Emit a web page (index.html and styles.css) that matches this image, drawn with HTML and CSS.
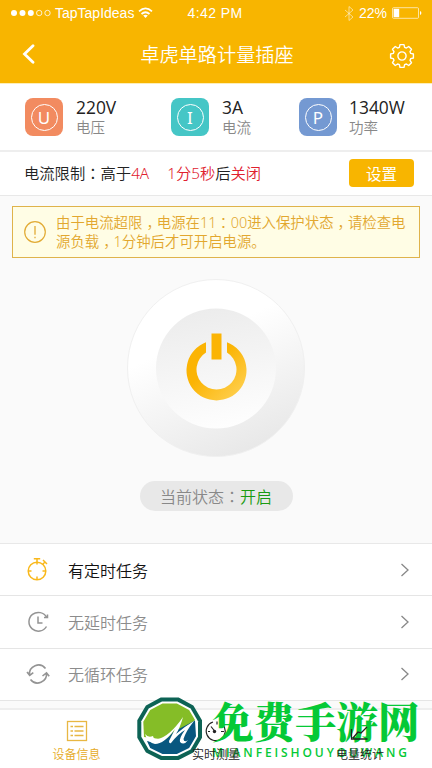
FILE: index.html
```html
<!DOCTYPE html>
<html lang="zh-CN">
<head>
<meta charset="utf-8">
<title>卓虎单路计量插座</title>
<link rel="stylesheet" href="styles.css">
</head>
<body>
<main class="app">
  <header class="header">
    <div class="status">
      <div class="status-left">
        <svg width="42" height="10" viewBox="0 0 42 10"><g fill="#fff"><circle cx="4" cy="5" r="3"/><circle cx="12.5" cy="5" r="3"/><circle cx="20.8" cy="5" r="3"/></g><g fill="none" stroke="#fff" stroke-width=".8"><circle cx="29.2" cy="5" r="2.7"/><circle cx="37.5" cy="5" r="2.7"/></g></svg>
        <span class="carrier">TapTapIdeas</span>
        <svg width="15" height="12" viewBox="0 0 15 12"><g fill="none" stroke="#fff" stroke-width="1.7"><path d="M1 4.3Q7.5-1.5 14 4.3M3.5 7Q7.5 3.5 11.5 7"/></g><path d="M5.2 8.6Q7.5 6.8 9.8 8.6L7.5 11Z" fill="#fff"/></svg>
      </div>
      <span class="time">4:42 PM</span>
      <div class="status-right">
        <svg width="10" height="15" viewBox="0 0 10 15"><path d="M1 4l8 7-4 3.500V.5L9 4l-8 7" fill="none" stroke="#fff" stroke-opacity=".6" stroke-width=".9"/></svg>
        <span class="percent">22%</span>
        <svg width="30" height="12" viewBox="0 0 30 12"><rect x=".5" y=".7" width="26" height="10.6" rx="1" fill="none" stroke="#fff" stroke-opacity=".8" stroke-width=".8"/><rect x="1.6" y="1.8" width="5.6" height="8.4" fill="#fff"/><path d="M28 4v4q1.4-.5 1.4-2T28 4" fill="#fff"/></svg>
      </div>
    </div>
    <nav class="titlebar">
      <svg class="back" width="14" height="20" viewBox="0 0 14 20"><path d="M11 1.7L2.500 10 11 18.300" fill="none" stroke="#fff" stroke-width="2.800" stroke-linecap="round"/></svg>
      <h1>卓虎单路计量插座</h1>
      <svg class="gear" width="26" height="26" viewBox="-13 -13 26 26"><g fill="none" stroke="#fff" stroke-width="1.400" stroke-linejoin="round"><path d="M-2.600-8.700L-2-11.400H2L2.600-8.700 4.400-8 6.700-9.500 9.500-6.700 8-4.400 8.700-2.600 11.400-2V2L8.700 2.600 8 4.400 9.500 6.700 6.700 9.500 4.400 8 2.600 8.700 2 11.400H-2L-2.600 8.700-4.400 8-6.700 9.500-9.500 6.700-8 4.400-8.700 2.600-11.400 2V-2L-8.700-2.600-8-4.400-9.500-6.700-6.700-9.500-4.400-8Z"/><circle r="4.100"/></g></svg>
    </nav>
  </header>

  <section class="stats">
    <div class="stat"><span class="tile orange"><i>U</i></span><div><b>220V</b><small>电压</small></div></div>
    <div class="stat"><span class="tile teal"><i class="serif-i">I</i></span><div><b>3A</b><small>电流</small></div></div>
    <div class="stat"><span class="tile blue"><i>P</i></span><div><b>1340W</b><small>功率</small></div></div>
  </section>

  <section class="limit">
    <p>电流限制<span class="mid" lang="zh-TW">：</span>高于<em>4A</em><em class="delay">1分5秒</em>后<em>关闭</em></p>
    <button>设置</button>
  </section>

  <section class="panel">
    <div class="alert">
      <svg width="24" height="24" viewBox="0 0 24 24"><circle cx="12" cy="12" r="10.3" fill="none" stroke="#e2ab35" stroke-width="1.2"/><path d="M12 6v8.800M12 16.700v1.600" stroke="#e2ab35" stroke-width="1.3"/></svg>
      <p>由于电流超限<span class="comma">，</span>电源在11<span class="mid" lang="zh-TW">：</span>00进入保护状态<span class="comma">，</span>请检查电<br>源负载<span class="comma">，</span>1分钟后才可开启电源。</p>
    </div>
    <svg class="power" width="180" height="180" viewBox="0 0 180 180">
      <defs>
        <linearGradient id="outer" x1=".3" y1=".1" x2=".7" y2="1"><stop offset=".25" stop-color="#fff"/><stop offset="1" stop-color="#e7e7e7"/></linearGradient>
        <linearGradient id="inner" x1=".4" y1="0" x2=".6" y2="1"><stop offset="0" stop-color="#ececec"/><stop offset="1" stop-color="#fefefe"/></linearGradient>
        <linearGradient id="gold" x1="0" y1="0" x2="1" y2="1"><stop offset=".4" stop-color="#fbb404"/><stop offset="1" stop-color="#ffd45c"/></linearGradient>
      </defs>
      <circle cx="90" cy="90" r="88.5" fill="url(#outer)" stroke="#f0f0f0" stroke-width="1"/>
      <circle cx="90" cy="90.5" r="60" fill="url(#inner)"/>
      <path d="M80 64.300A30 30 0 1 0 101 64.300V74.500A20 20 0 1 1 80 74.500Z" fill="url(#gold)"/>
      <rect x="85.500" y="55.500" width="10" height="26" fill="#fbb404"/>
    </svg>
    <div class="pill">当前状态<span class="mid" lang="zh-TW">：</span><span class="on">开启</span></div>
  </section>

  <ul class="tasks">
    <li class="active">
      <svg width="26" height="26" viewBox="0 0 26 26"><g fill="none" stroke="#f9b81b" stroke-width="1.5"><circle cx="12" cy="14" r="8.800"/><path d="M8.800 1.800h6.400M12 2v5.600M18 3l4 4M20 5l-2.500 2.500M12 19.500v3M3.500 14h3M17.500 14h3"/></g></svg>
      <span>有定时任务</span><svg class="chevron" width="10" height="16" viewBox="0 0 10 16"><path d="M1.500 2L8 8l-6.500 6"/></svg>
    </li>
    <li>
      <svg width="26" height="26" viewBox="0 0 26 26"><g fill="none" stroke="#949494" stroke-width="1.5"><path d="M21.500 17.500A9.400 9.400 0 1 1 21.700 8.500M19 8.500h3.500V5.500"/><path d="M13 7.500v6.500h4.500"/></g></svg>
      <span>无延时任务</span><svg class="chevron" width="10" height="16" viewBox="0 0 10 16"><path d="M1.500 2L8 8l-6.500 6"/></svg>
    </li>
    <li>
      <svg width="26" height="26" viewBox="0 0 26 26"><g fill="none" stroke="#949494" stroke-width="1.600"><path d="M4.500 14A9 9 0 0 1 20.500 7.500M21.500 12A9 9 0 0 1 5.500 18.500M2 11l2.700 3.300 3.600-2.600M17.500 15l4-3.200 2.700 3.500"/></g></svg>
      <span>无循环任务</span><svg class="chevron" width="10" height="16" viewBox="0 0 10 16"><path d="M1.500 2L8 8l-6.500 6"/></svg>
    </li>
  </ul>

  <footer class="tabs">
    <div class="tab current">
      <svg width="22" height="22" viewBox="0 0 22 22"><g fill="none" stroke="#e8b743" stroke-width="1.300"><rect x="1.500" y="1.500" width="19" height="19"/><path d="M4.500 6.500h2.500M8.500 6.500h9M4.500 11h2.500M8.500 11h9M4.500 15.500h2.500M8.500 15.500h9"/></g></svg>
      <span>设备信息</span>
    </div>
    <div class="tab">
      <svg width="22" height="22" viewBox="0 0 22 22"><path d="M8 2A9.500 9.500 0 1 0 18 5M12 1.500v3M3 11.500h2M16 11.500h3M6 6.500l4 5" fill="none" stroke="#222" stroke-width="1.200"/><circle cx="9.500" cy="11.500" r="1.700" fill="#222"/></svg>
      <span>实时测量</span>
    </div>
    <div class="tab">
      <svg class="chart" width="22" height="22" viewBox="0 0 22 22"><path d="M2.500 9v10h16M4 18l5-6 3 1 6-6" fill="none" stroke="#222" stroke-width="1.300"/></svg>
      <span>电量统计</span>
    </div>
  </footer>

  <aside class="brand">
    <svg width="68" height="66" viewBox="0 0 68 66">
      <path d="M25.200 2.500H42.200L56.800 10.500 65 24.500V41.500L56.800 55.500 42.200 63H25.200L10.500 55.500 2.300 41.500V24.500L10.500 10.500Z" fill="#0d6355" stroke="#0d6355" stroke-width="2" stroke-linejoin="round"/>
      <path d="M26 5.500H41.400L54.600 12.600 62 25.300V40.700L54.600 53.400 41.400 60H26L12.700 53.400 5.300 40.700V25.300L12.700 12.600Z" fill="#fff"/>
      <path d="M26.500 7.500H40.900L53.100 14.100 59 24 40 45 8 41 7.300 25.800 14.200 14.100Z" fill="#85bd27"/>
      <path d="M11 45Q27 50 37 36L59 24.500 60 40.200 53.100 51.900 40.900 58H26.500L14.200 51.900Z" fill="#08577f"/>
      <path d="M9 38Q12 42 17 40Q18 44 22 43Q34 40 47 21Q44 32 40 38Q48 31 58 25Q50 35 47.500 43Q48 47 52 44Q48 50 44 46Q43 42 49 34Q42 38 35 47Q33 48 33 45L39 33Q28 48 19 48Q11 46 9 38Z" fill="#fff"/>
    </svg>
    <div class="brand-text"><strong>免费手游网</strong><span>MIANFEISHOUYOUWANG</span></div>
  </aside>
</main>
</body>
</html>
```

FILE: styles.css
```css
* { box-sizing: border-box; }
body, h1, p, ul { margin: 0; padding: 0; }
body { width: 432px; height: 768px; overflow: hidden; background: #fafafa; font-family: "Open Sans", "Noto Sans CJK SC", sans-serif; font-weight: 350; color: #222; }
svg { display: block; flex: none; }
em, i { font-style: normal; }
.mid { font-family: "Noto Sans CJK TC", sans-serif; }
.comma { display: inline-block; width: 1em; text-indent: .28em; line-height: 1; }
.app { position: relative; display: flex; flex-direction: column; width: 432px; height: 768px; }

.header { height: 84px; background: #f8b500; border-bottom: 1px solid #fdeeb8; color: #fff; }
.status { display: grid; grid-template-columns: 1fr auto 1fr; align-items: center; height: 26px; padding: 0 10px; font: 14px/26px "Liberation Sans", sans-serif; }
.status-left, .status-right { display: flex; align-items: center; }
.carrier { margin: 0 4px 0 3px; }
.time { margin-left: -2px; letter-spacing: .4px; }
.status-right { justify-content: flex-end; gap: 5px; }
.titlebar { display: flex; justify-content: space-between; align-items: center; height: 58px; padding: 0 17px 0 22px; }
.titlebar h1 { font-size: 19.200px; font-weight: 350; line-height: 28px; margin-left: 9px; }
.gear { margin-top: 2px; }
.back { margin-top: -2px; }

.stats { display: grid; grid-template-columns: 146px 128px 1fr; height: 68px; padding: 14px 0 0 25px; background: #fff; border-bottom: 2px solid #eee; }
.stat { display: flex; gap: 13px; }
.stat:last-child { gap: 12px; }
.stat div { display: flex; flex-direction: column; margin-top: -1px; }
.stat b { font-size: 17.400px; line-height: 21px; font-weight: 400; }
.stat small { font-size: 14.500px; line-height: 19px; color: #888; }
.tile { display: flex; align-items: center; justify-content: center; width: 38px; height: 38px; border-radius: 8px; }
.tile i { display: flex; align-items: center; justify-content: center; width: 27px; height: 27px; border: 1.500px solid #fff; border-radius: 50%; color: #fff; font: 400 17px/1 "Noto Sans", sans-serif; }
.orange { background: #f28b60; }
.teal { background: #45c6c6; }
.blue { background: #7499d2; }

.limit { display: flex; align-items: center; justify-content: space-between; height: 44px; padding: 0 18px 2px 24px; background: #fff; border-bottom: 1px solid #e8e8e8; }
.limit p { font-family: "Noto Sans", "Noto Sans CJK SC", sans-serif; font-size: 15.300px; line-height: 24px; }
.limit em { color: #e0202e; }
.limit .delay { margin-left: 18px; }
.limit button { width: 65px; height: 28px; padding: 0; border: 0; border-radius: 4px; background: #f8b500; color: #fff; font: 400 15.500px/28px "Noto Sans CJK SC", sans-serif; }

.panel { display: flex; flex-direction: column; align-items: center; height: 347px; padding-top: 10px; }
.alert { display: flex; align-items: center; gap: 9px; width: 408px; height: 52px; padding-left: 10px; border: 1px solid #dfb34b; background: #fffde5; }
.alert p { font-family: "Noto Sans", "Noto Sans CJK SC", sans-serif; font-size: 14.400px; line-height: 18.500px; color: #e2a72e; white-space: nowrap; }
.power { margin: 20px 0 0 -1px; }
.pill { width: 153px; height: 30px; margin-top: 23px; border-radius: 15px; background: #e8e8e8; color: #888; font-size: 16px; line-height: 30px; text-align: center; }
.on { color: #1a9b12; }

.tasks { list-style: none; background: #fff; border-top: 1px solid #e8e8e8; }
.tasks li { display: flex; align-items: center; height: 52.300px; padding: 0 22px 0 25px; border-bottom: 1px solid #e5e5e5; font-size: 16px; color: #8c8c8c; }
.tasks li span { flex: 1; margin-left: 17px; }
.tasks .active { color: #111; }
.chevron path { fill: none; stroke: #888; stroke-width: 1.300; }

.tabs { display: grid; grid-template-columns: repeat(3, 144px); height: 60px; margin-top: auto; padding-top: 10px; border-top: 2px solid #eee; background: #fff; }
.tab { display: flex; flex-direction: column; align-items: center; gap: 4px; font-size: 12px; line-height: 18px; }
.tab span, .tab .chart { position: relative; z-index: 2; }
.current { color: #e5aa25; padding-left: 9px; }

.brand { position: absolute; z-index: 1; left: 136px; top: 696px; display: flex; color: #05c936; }
.brand-text { display: flex; flex-direction: column; margin-left: 8px; white-space: nowrap; }
.brand-text strong { font: 900 41.500px/48px "Noto Serif CJK SC", "Noto Sans CJK SC", serif; }
.brand-text span { font: 600 12px/18px "Open Sans", sans-serif; letter-spacing: 2.900px; }
```
